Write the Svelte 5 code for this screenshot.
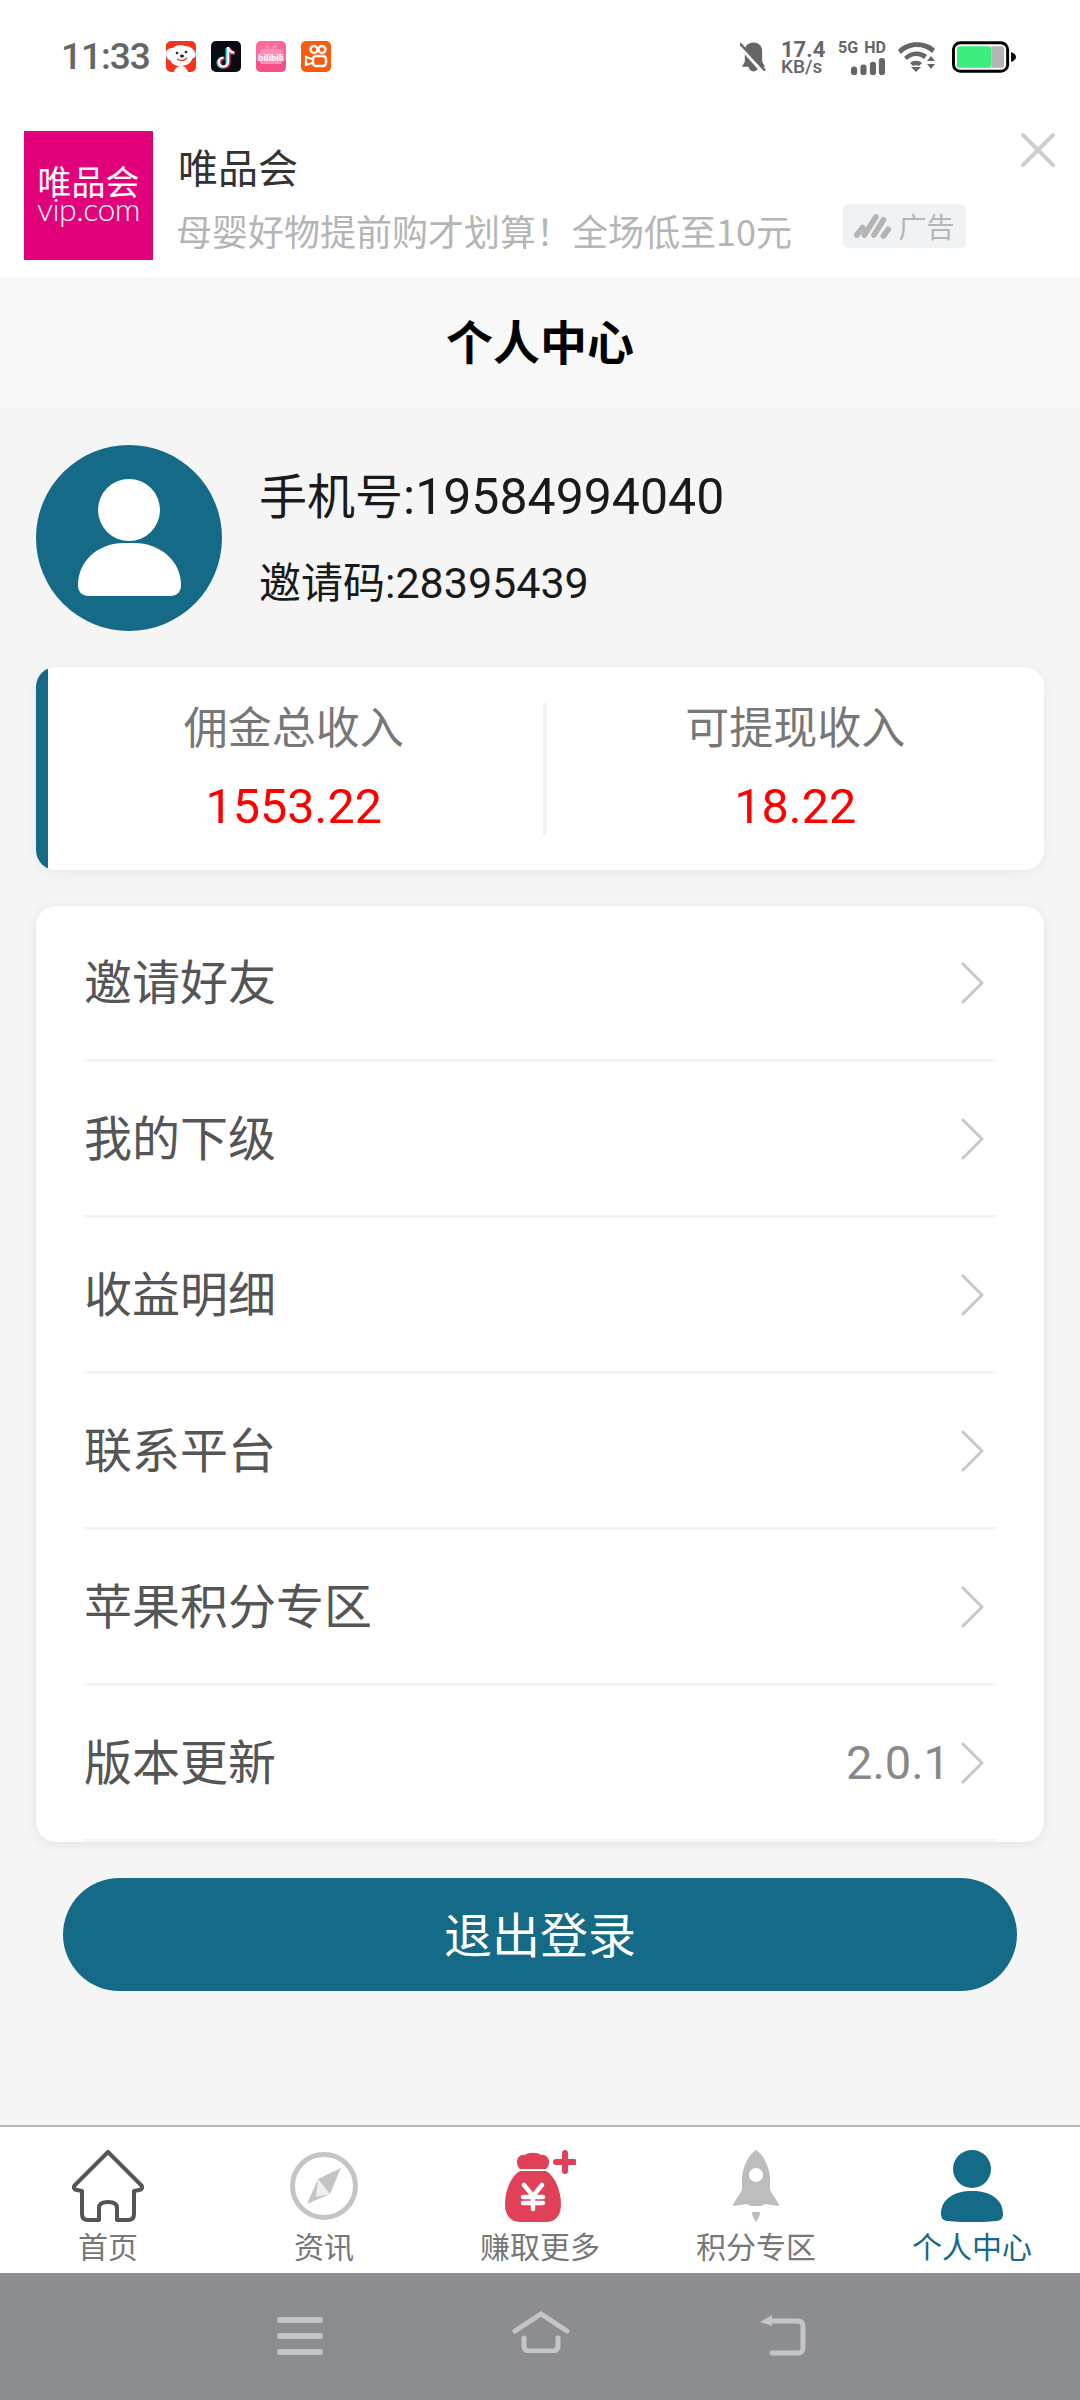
<script>
  const items = ['邀请好友', '我的下级', '收益明细', '联系平台', '苹果积分专区', '版本更新'];
</script>

<div class="page">
  <div class="status">
    <span class="time">11:33</span>
    <div class="apps">
      <svg class="app" viewBox="0 0 30 31"><rect width="30" height="31" rx="5" fill="#f5341e"/><path d="M0 12c0-3 3-5 7-5 3-3 8-4 12-2 4 0 8 2 10 6 2 3 0 6-3 7-1 4-5 7-11 7s-9-2-11-6c-3 0-4-4-4-7z" fill="#fff"/><path d="M8 31c1-4 4-6 7-6s6 2 7 6z" fill="#fff"/><circle cx="11" cy="12" r="1.300" fill="#222"/><circle cx="20" cy="11" r="1.300" fill="#222"/><ellipse cx="16" cy="15" rx="2" ry="1.500" fill="#222"/><path d="M11 18c3 2 7 2 10-1" stroke="#f5341e" stroke-width="1.200" fill="none"/></svg>
      <svg class="app" viewBox="0 0 30 31"><rect width="30" height="31" rx="5" fill="#0b0b14"/><path d="M17 6v15a4.500 4.500 0 1 1-4.500-4.500M17 6c.5 3 3 5 6 5.500" fill="none" stroke="#25e4e0" stroke-width="3" transform="translate(-1 .8)"/><path d="M17 6v15a4.500 4.500 0 1 1-4.500-4.500M17 6c.5 3 3 5 6 5.500" fill="none" stroke="#fe2c55" stroke-width="3" transform="translate(1 .8)"/><path d="M17 6v15a4.500 4.500 0 1 1-4.500-4.500M17 6c.5 3 3 5 6 5.500" fill="none" stroke="#fff" stroke-width="2.200"/></svg>
      <svg class="app" viewBox="0 0 30 31"><rect width="30" height="31" rx="5" fill="#fb6a9c"/><path d="M0 20h30v6a5 5 0 0 1-5 5H5a5 5 0 0 1-5-5z" fill="#f84f8c"/><path d="M10 4l3 4M20 4l-3 4" stroke="#ff9dbf" stroke-width="1.500"/><rect x="4" y="8" width="22" height="15" rx="2" fill="#ff8db4"/><text x="15" y="20" text-anchor="middle" class="bilitext">bilibili</text></svg>
      <svg class="app" viewBox="0 0 30 31"><rect width="30" height="31" rx="5" fill="#fa5a0f"/><circle cx="13" cy="8.500" r="3.500" fill="none" stroke="#fff" stroke-width="2.400"/><circle cx="21" cy="8.500" r="3.500" fill="none" stroke="#fff" stroke-width="2.400"/><rect x="12" y="15" width="13" height="10" rx="3" fill="none" stroke="#fff" stroke-width="2.400"/><path d="M11 18l-6-2v8l6-2" fill="none" stroke="#fff" stroke-width="2.200"/></svg>
    </div>
    <div class="sys">
      <svg class="bell" viewBox="0 0 28 30"><path d="M14 0C8 0 5 4 5 9v11l-3 5h24l-3-5V9c0-5-3-9-9-9z M9 25a5 5 0 0 0 10 0z" fill="#666"/><path d="M0 3l24 27" stroke="#fff" stroke-width="5"/><path d="M0 1l26 28" stroke="#666" stroke-width="2.600"/></svg>
      <div class="speed"><b>17.4</b><span>KB/s</span></div>
      <div class="net">
        <div class="netlabels"><span>5G</span><span>HD</span></div>
        <svg class="bars" viewBox="0 0 36 18"><rect x="0" y="9" width="6.500" height="9" rx="3"/><rect x="10" y="7" width="6.500" height="11" rx="3"/><rect x="20" y="4" width="6.500" height="14" rx="3"/><rect x="29.500" y="0" width="6.500" height="18" rx="3"/></svg>
      </div>
      <svg class="wifi" viewBox="0 0 38 30"><path d="M0 8C9-2 28-2 37 7l-3 4C25 3 12 3 3 12z M6 15c7-7 17-7 23-2l-3 4c-5-4-12-4-17 1z M12 21c3-3 9-3 12 0l-3 3c-2-1-4-1-6 0z M13 25h10l-5 5z" fill="#666"/><path d="M33 14l4 5h-8z M29 22h8l-4 5z" fill="#666"/></svg>
      <svg class="battery" viewBox="0 0 66 32"><rect x="1.500" y="1.500" width="55" height="29" rx="7" fill="#fff" stroke="#000" stroke-width="3"/><rect x="5" y="5" width="35" height="22" rx="3" fill="#3ded7f"/><path d="M40 5h10a3 3 0 0 1 3 3v16a3 3 0 0 1-3 3H40z" fill="#b4b4b4"/><path d="M60 11c3 1 5 3 5 5s-2 4-5 5z" fill="#000"/></svg>
    </div>
  </div>

  <div class="ad">
    <div class="logo"><span class="lcn">唯品会</span><span class="len">vip.com</span></div>
    <div class="adtext">
      <div class="adtitle">唯品会</div>
      <div class="adsub">
        <span>母婴好物提前购才划算！全场低至10元</span>
        <div class="chip">
          <svg viewBox="0 0 40 26"><path d="M3 22l6-8 M11 22l12-19 M21 22l10-16 M31 23l5-7" stroke="#b4b4b4" stroke-width="6" stroke-linecap="round"/></svg>
          <span>广告</span>
        </div>
      </div>
    </div>
    <svg class="close" viewBox="0 0 36 36"><path d="M3 3l30 30M33 3L3 33" stroke="#cfcfcf" stroke-width="4" stroke-linecap="round"/></svg>
  </div>

  <div class="header">个人中心</div>

  <div class="main">
    <div class="profile">
      <svg class="avatar" viewBox="0 0 186 186"><circle cx="93" cy="93" r="93" fill="#156a87"/><circle cx="93" cy="65" r="31" fill="#fff"/><path d="M42 140c0-24 20-42 46-42h10c26 0 47 18 47 42 0 7-4 11-11 11H53c-7 0-11-4-11-11z" fill="#fff"/></svg>
      <div class="who">
        <div class="phone"><span class="cn">手机号</span><span class="num">:19584994040</span></div>
        <div class="code"><span class="cn">邀请码</span><span class="num">:28395439</span></div>
      </div>
    </div>

    <div class="stats">
      <div class="stat"><div class="slabel">佣金总收入</div><div class="sval">1553.22</div></div>
      <div class="sdiv"></div>
      <div class="stat"><div class="slabel">可提现收入</div><div class="sval">18.22</div></div>
    </div>

    <div class="menu">
      {#each items as item, i}
        <div class="row">
          <span class="rlabel">{item}</span>
          {#if i === 5}<span class="ver">2.0.1</span>{/if}
          <svg class="chev" viewBox="0 0 24 44"><path d="M2 2l20 20L2 42" fill="none" stroke="#c8c8c8" stroke-width="3"/></svg>
        </div>
      {/each}
    </div>

    <div class="logout">退出登录</div>
  </div>

  <div class="tabs">
    <div class="tab">
      <svg class="ticon" viewBox="0 0 72 72"><path d="M36 2L3 35c-2 2-1 5 2 5l5 1v23c0 4 2 6 6 6h11V58c0-4 3-6 9-6s9 2 9 6v12h11c4 0 6-2 6-6V41l5-1c3 0 4-3 2-5z" fill="none" stroke="#555" stroke-width="4" stroke-linejoin="round"/></svg>
      <span>首页</span>
    </div>
    <div class="tab">
      <svg class="ticon" viewBox="0 0 72 72"><circle cx="36" cy="36" r="31.500" fill="none" stroke="#c4c4c4" stroke-width="5"/><path d="M53 18L42 44 19 54 30 29z" fill="#c4c4c4"/><path d="M30 29l12 15-14 3z" fill="#fff" opacity=".75"/></svg>
      <span>资讯</span>
    </div>
    <div class="tab">
      <svg class="ticon" viewBox="0 0 72 72"><path d="M13 12c0-5 4-8 8-7 3-3 13-3 16 0 4-1 8 2 8 7 0 3-1 5-3 7H16c-2-2-3-4-3-7z" fill="#e04159"/><path d="M16 21h26c9 5 15 20 15 33 0 12-6 18-15 18H16C7 72 1 66 1 54c0-13 6-28 15-33z" fill="#e04159"/><path d="M20 35l9 11 9-11M29 46v13M19 47h20M19 53h20" fill="none" stroke="#fff" stroke-width="4.500" stroke-linecap="round"/><path d="M61 3v18M52 12h18" stroke="#e04159" stroke-width="6" stroke-linecap="round"/></svg>
      <span>赚取更多</span>
    </div>
    <div class="tab">
      <svg class="ticon" viewBox="0 0 72 72"><path d="M36 0c8 5 13 17 14 27v13l8 13c1 2 1 3 0 3l-13-2-4 2H31l-4-2-13 2c-1 0-1-1 0-3l8-13V27C23 17 28 5 36 0z" fill="#bdbdbd"/><circle cx="36" cy="25" r="7" fill="#fff"/><path d="M32 62h8c0 4-2 7-4 10-2-3-4-6-4-10z" fill="#bdbdbd"/></svg>
      <span>积分专区</span>
    </div>
    <div class="tab active">
      <svg class="ticon" viewBox="0 0 72 72"><circle cx="36" cy="19" r="19" fill="#156a87"/><path d="M5 64c0-15 13-23 31-23s31 8 31 23c0 5-3 7-7 7-8 1-16 1-24 1s-16 0-24-1c-4 0-7-2-7-7z" fill="#156a87"/></svg>
      <span>个人中心</span>
    </div>
  </div>

  <div class="nav">
    <svg class="n1" viewBox="0 0 46 38"><path d="M3 3h40M3 19h40M3 35h40" stroke="#c4c5c8" stroke-width="6" stroke-linecap="round"/></svg>
    <svg class="n2" viewBox="0 0 58 42"><path d="M3 20L29 3l26 17M12 27v8c0 3 2 5 5 5h24c3 0 5-2 5-5v-8" fill="none" stroke="#c4c5c8" stroke-width="5" stroke-linecap="round"/></svg>
    <svg class="n3" viewBox="0 0 48 42"><path d="M12 7h28c3 0 5 2 5 5v22c0 3-2 5-5 5H14" fill="none" stroke="#c4c5c8" stroke-width="5" stroke-linecap="round"/><path d="M14 1L2 8l12 4z" fill="#c4c5c8"/></svg>
  </div>
</div>

<style>
  :global(body) { margin: 0; background: #f5f5f5; }
  .page {
    width: 1080px; height: 2400px; display: flex; flex-direction: column; overflow: hidden;
    font-family: "Noto Sans CJK SC", "Noto Sans", sans-serif; background: #f5f5f5;
  }
  .status { height: 131px; flex: none; background: #fff; display: flex; align-items: flex-start; box-sizing: border-box; padding: 41px 63px 0 61px; }
  .time { font: 500 37px/32px Roboto, sans-serif; color: #666; width: 105px; letter-spacing: -1px; }
  .apps { display: flex; gap: 15px; }
  .app { width: 30px; height: 31px; display: block; }
  .bilitext { font: 700 9.500px Roboto, sans-serif; fill: #fff; }
  .sys { margin-left: auto; display: flex; align-items: center; height: 32px; }
  .bell { width: 27px; height: 30px; margin-right: 14px; }
  .speed { display: flex; flex-direction: column; color: #666; font-family: Roboto, sans-serif; width: 44px; margin-right: 13px; }
  .speed b { font-size: 22px; line-height: 19px; font-weight: 700; }
  .speed span { font-size: 19px; line-height: 15px; font-weight: 500; }
  .net { width: 48px; margin-right: 12px; display: flex; flex-direction: column; align-items: flex-end; gap: 3px; }
  .netlabels { display: flex; justify-content: space-between; width: 48px; font: 700 16px/15px Roboto, sans-serif; color: #666; }
  .bars { width: 36px; height: 17px; fill: #666; }
  .wifi { width: 38px; height: 30px; margin-right: 16px; }
  .battery { width: 65px; height: 32px; }

  .ad { height: 146px; flex: none; background: #fff; display: flex; box-sizing: border-box; padding-left: 24px; position: relative; }
  .logo { width: 129px; height: 129px; background: #e3007b; color: #fff; display: flex; flex-direction: column; align-items: center; justify-content: center; box-sizing: border-box; padding-bottom: 6px; }
  .lcn { font-size: 34px; line-height: 36px; font-weight: 400; }
  .len { font: 300 32px/28px Lato, sans-serif; letter-spacing: -.5px; margin-top: -4px; }
  .adtext { margin-left: 25px; }
  .adtitle { font-size: 40px; line-height: 48px; color: #333; margin-top: 11px; }
  .adsub { display: flex; align-items: flex-start; margin-top: 16px; margin-left: -2px; font-size: 36px; line-height: 48px; color: #b5b5b5; }
  .chip { margin-left: 51px; margin-top: -2px; width: 123px; height: 44px; background: #f0f3f6; border-radius: 5px; display: flex; align-items: center; justify-content: center; gap: 6px; font-size: 28px; line-height: 44px; color: #b5b5b5; }
  .chip svg { width: 38px; height: 25px; }
  .close { position: absolute; right: 24px; top: 1px; width: 36px; height: 36px; }

  .header { height: 131px; flex: none; box-sizing: border-box; padding-bottom: 6px; background: #f8f8f8; display: flex; align-items: center; justify-content: center; font-size: 47px; font-weight: 700; color: #000; }

  .main { flex: 1; display: flex; flex-direction: column; padding: 0 36px; min-height: 0; }
  .profile { display: flex; align-items: center; margin-top: 37px; height: 185px; }
  .avatar { width: 186px; height: 186px; flex: none; }
  .who { margin-left: 37px; color: #1a1a1a; padding-bottom: 8px; }
  .phone { height: 68px; display: flex; align-items: baseline; line-height: 68px; }
  .phone .cn { font-size: 48px; }
  .phone .num { font: 400 50px/68px Roboto, sans-serif; }
  .code { height: 58px; margin-top: 24px; display: flex; align-items: baseline; line-height: 58px; }
  .code .cn { font-size: 42px; }
  .code .num { font: 400 43px/58px Roboto, sans-serif; }

  .stats { margin-top: 37px; height: 203px; background: linear-gradient(to right, #156a87 12px, #fff 12px); border-radius: 20px; box-shadow: 0 2px 12px rgba(0,0,0,.06); display: flex; align-items: center; box-sizing: border-box; padding-left: 9px; flex: none; }
  .stat { flex: 1; text-align: center; padding-bottom: 6px; }
  .slabel { font-size: 44px; line-height: 60px; color: #777; }
  .sval { font: 400 48.500px/60px Roboto, sans-serif; color: #f00; margin-top: 22px; }
  .sdiv { width: 4px; height: 132px; background: #f3f3f3; }

  .menu { margin-top: 36px; height: 936px; background: #fff; border-radius: 20px; box-shadow: 0 2px 12px rgba(0,0,0,.08); box-sizing: border-box; padding: 0 48px; flex: none; }
  .row { height: 156px; box-sizing: border-box; border-bottom: 3px solid #f3f3f3; display: flex; align-items: center; }
  .rlabel { font-size: 48px; color: #555; padding-bottom: 7px; }
  .ver { margin-left: auto; font: 400 47px/1 Roboto, sans-serif; color: #888; margin-right: 10px; }
  .chev { width: 24px; height: 44px; margin-right: 12px; margin-left: auto; }
  .ver + .chev { margin-left: 0; }

  .logout { margin: 36px 27px 0; height: 113px; box-sizing: border-box; padding-bottom: 6px; border-radius: 57px; background: #156a87; color: #fff; font-size: 48px; display: flex; align-items: center; justify-content: center; flex: none; }

  .tabs { height: 148px; flex: none; background: #fff; border-top: 2px solid #b8b8b8; display: flex; box-sizing: border-box; }
  .tab { width: 216px; display: flex; flex-direction: column; align-items: center; padding-top: 23px; box-sizing: border-box; color: #777; font-size: 30px; line-height: 40px; }
  .tab span { margin-top: 3px; }
  .tab.active { color: #156a87; }
  .ticon { width: 72px; height: 72px; flex: none; }
  .nav { height: 127px; flex: none; background: #8c8d91; display: flex; align-items: flex-start; padding: 44px 0 0 277px; box-sizing: border-box; }
  .n1 { width: 46px; height: 38px; }
  .n2 { width: 58px; height: 42px; margin-left: 189px; margin-top: -6px; }
  .n3 { width: 48px; height: 42px; margin-left: 188px; margin-top: -3px; }
</style>
